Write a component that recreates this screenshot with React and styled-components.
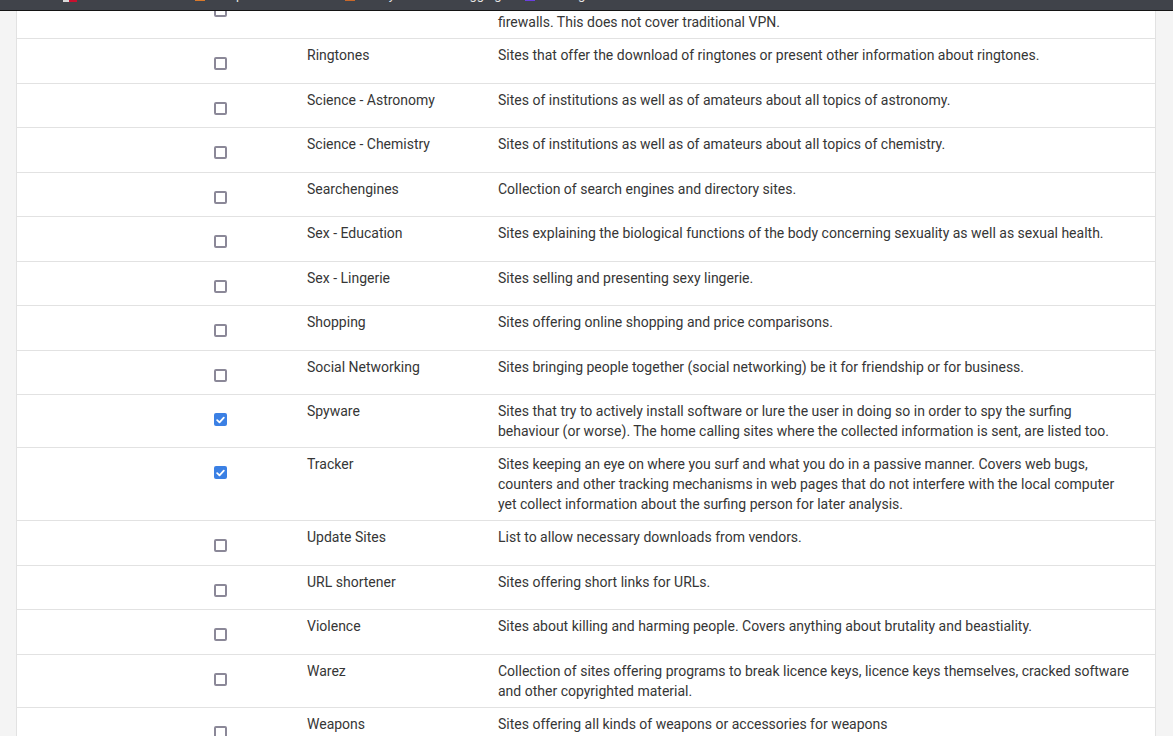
import React from 'react';
import styled, { createGlobalStyle } from 'styled-components';

const GlobalStyle = createGlobalStyle`
  html, body {
    margin: 0;
    padding: 0;
    overflow: hidden;
    background: #f4f4f4;
  }

  body {
    font-family: Roboto, "Liberation Sans", Arial, sans-serif;
    font-size: 14px;
    line-height: 20px;
    color: #363636;
  }
`;

const categories = [
  {
    name: 'Remote Control',
    desc: 'Sites offering remote access to computers or tunnels through the net which may be used to bypass firewalls. This does not cover traditional VPN.',
  },
  { name: 'Ringtones', desc: 'Sites that offer the download of ringtones or present other information about ringtones.' },
  { name: 'Science - Astronomy', desc: 'Sites of institutions as well as of amateurs about all topics of astronomy.' },
  { name: 'Science - Chemistry', desc: 'Sites of institutions as well as of amateurs about all topics of chemistry.' },
  { name: 'Searchengines', desc: 'Collection of search engines and directory sites.' },
  { name: 'Sex - Education', desc: 'Sites explaining the biological functions of the body concerning sexuality as well as sexual health.' },
  { name: 'Sex - Lingerie', desc: 'Sites selling and presenting sexy lingerie.' },
  { name: 'Shopping', desc: 'Sites offering online shopping and price comparisons.' },
  { name: 'Social Networking', desc: 'Sites bringing people together (social networking) be it for friendship or for business.' },
  {
    name: 'Spyware',
    checked: true,
    desc: 'Sites that try to actively install software or lure the user in doing so in order to spy the surfing behaviour (or worse). The home calling sites where the collected information is sent, are listed too.',
  },
  {
    name: 'Tracker',
    checked: true,
    desc: 'Sites keeping an eye on where you surf and what you do in a passive manner. Covers web bugs, counters and other tracking mechanisms in web pages that do not interfere with the local computer yet collect information about the surfing person for later analysis.',
  },
  { name: 'Update Sites', desc: 'List to allow necessary downloads from vendors.' },
  { name: 'URL shortener', desc: 'Sites offering short links for URLs.' },
  { name: 'Violence', desc: 'Sites about killing and harming people. Covers anything about brutality and beastiality.' },
  {
    name: 'Warez',
    desc: 'Collection of sites offering programs to break licence keys, licence keys themselves, cracked software and other copyrighted material.',
  },
  { name: 'Weapons', desc: 'Sites offering all kinds of weapons or accessories for weapons' },
  { name: 'Webmail', desc: 'Sites offering webmail services.' },
];

const navItems = [
  { label: 'Setup', icon: '#d9792b', width: 150 },
  { label: 'Policy', icon: '#c9682a', width: 110 },
  { label: 'Logging', icon: null, width: 70 },
  { label: 'Hosting', icon: '#6a3fe0', width: 90 },
];

const CheckMark = () => (
  <svg width="9" height="8" viewBox="0 0 9 8" fill="none">
    <path d="M1.2 4.2 L3.5 6.3 L7.8 1.6" stroke="#fff" strokeWidth="1.8" strokeLinecap="round" strokeLinejoin="round" />
  </svg>
);

const App = () => (
  <>
    <GlobalStyle />
    <Header>
      <NavInner>
        <Flag />
        <NavList>
          {navItems.map((item) => (
            <NavItem key={item.label} $width={item.width}>
              {item.icon && <NavIcon $color={item.icon} />}
              {item.label}
            </NavItem>
          ))}
        </NavList>
      </NavInner>
    </Header>
    <Main>
      <Table>
        <colgroup>
          <col style={{ width: 128 }} />
          <col style={{ width: 151 }} />
          <col style={{ width: 192 }} />
          <col />
        </colgroup>
        <tbody>
          {categories.map((cat) => (
            <Row key={cat.name}>
              <td />
              <CheckCell>
                <Box $checked={cat.checked}>{cat.checked && <CheckMark />}</Box>
              </CheckCell>
              <NameCell>{cat.name}</NameCell>
              <DescCell>{cat.desc}</DescCell>
            </Row>
          ))}
        </tbody>
      </Table>
    </Main>
  </>
);

const Header = styled.header`
  position: sticky;
  top: 0;
  z-index: 2;
  height: 10px;
  overflow: hidden;
  background: #40434a;
  border-bottom: 1px solid #141414;
`;

const NavInner = styled.div`
  display: flex;
  align-items: flex-start;
  margin-top: -12px;
  padding-left: 63px;
  font-size: 13px;
  line-height: 14px;
  color: #e6e6e6;
`;

const Flag = styled.span`
  width: 14px;
  height: 14px;
  background: linear-gradient(90deg, #d8d8d8 0 40%, #c8102e 40% 100%);
`;

const NavList = styled.div`
  display: flex;
  margin-left: 118px;
`;

const NavItem = styled.span`
  display: flex;
  align-items: flex-start;
  gap: 5px;
  width: ${({ $width }) => $width}px;
`;

const NavIcon = styled.span`
  width: 10px;
  height: 13px;
  background: ${({ $color }) => $color};
`;

const Main = styled.main`
  margin-top: -26px;
  padding: 0 17px 0 16px;
`;

const Table = styled.table`
  width: 100%;
  table-layout: fixed;
  border-collapse: separate;
  border-spacing: 0;
  background: #fff;
  border-left: 1px solid #e2e2e2;
  border-right: 1px solid #e2e2e2;

  td {
    border-top: 1px solid #e2e2e2;
    vertical-align: top;
    padding: 0;
  }
`;

const Row = styled.tr``;

const CheckCell = styled.td`
  && {
    padding: 18px 0 12.5px;
  }
`;

const Box = styled.span`
  display: flex;
  align-items: center;
  justify-content: center;
  box-sizing: border-box;
  width: 13px;
  height: 13px;
  margin: 0 auto;
  border-radius: 2px;
  border: ${({ $checked }) => ($checked ? 'none' : '2px solid #8b8898')};
  background: ${({ $checked }) => ($checked ? '#3b80e4' : '#fff')};
`;

const NameCell = styled.td`
  && {
    padding: 6px 8px 6px 11px;
  }
`;

const DescCell = styled.td`
  && {
    padding: 6px 23px 6px 10px;
  }
`;

export default App;
